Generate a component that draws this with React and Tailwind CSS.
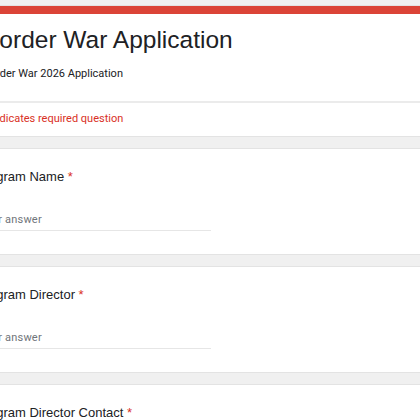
const questions = ["Program Name", "Program Director", "Program Director Contact"];

function Question({ label }) {
  return (
    <div className="rounded-lg border border-[#e3e3e3] bg-white pl-[3px] pt-[18px] pb-[23px]">
      <div className="font-['Liberation_Sans',Arial,sans-serif] text-[13px] leading-5 text-[#202124]">
        {label} <span className="text-[#d93025]">*</span>
      </div>
      <div className="mt-[25px] w-[235px] border-b border-[#e6e6e6] pb-[2px] pl-[3px] font-['Roboto',sans-serif] text-[11px] leading-4 tracking-[0.2px] text-[#70757a]">
        Your answer
      </div>
    </div>
  );
}

export default function App() {
  return (
    <div className="min-h-screen overflow-hidden bg-[#f0f0f0] pt-[5px]">
      <div className="-ml-[28px] flex w-[480px] flex-col gap-[11px]">
        <div className="overflow-hidden rounded-lg border border-[#e3e3e3] bg-white">
          <div className="h-[8px] bg-[#db4437]" />
          <div className="pl-[10px] pt-[10px] pb-[19px]">
            <h1 className="font-['Liberation_Sans',Arial,sans-serif] text-[24.5px] leading-8 text-[#202124]">
              Border War Application
            </h1>
            <p className="mt-[10px] font-['Roboto',sans-serif] text-[11px] leading-4 text-[#202124]">
              Border War 2026 Application
            </p>
          </div>
          <div className="border-t-2 border-[#ebebeb] pl-[10px] pt-[8px] pb-[9px] font-['Roboto',sans-serif] text-[11px] leading-4 text-[#d93025]">
            * Indicates required question
          </div>
        </div>
        {questions.map((q) => (
          <Question key={q} label={q} />
        ))}
      </div>
    </div>
  );
}
